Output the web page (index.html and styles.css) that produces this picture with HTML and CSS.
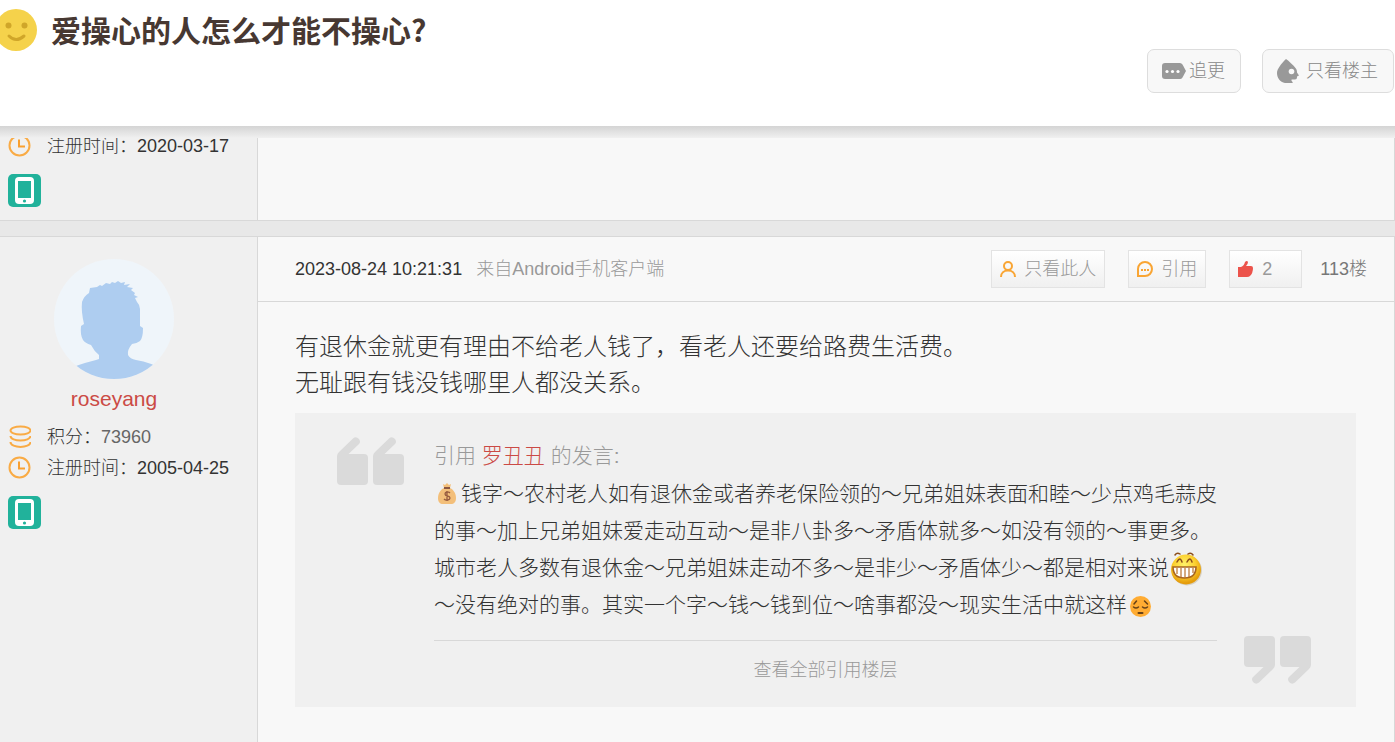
FILE: index.html
```html
<!DOCTYPE html>
<html lang="zh-CN">
<head>
    <meta charset="UTF-8">
    <meta name="viewport" content="width=device-width, initial-scale=1.0">
    <title>爱操心的人怎么才能不操心？</title>
    <link rel="stylesheet" href="styles.css">
</head>
<body>
    <!-- shared icons -->
    <svg class="sprite" width="0" height="0" aria-hidden="true">
        <symbol id="icon-clock" viewBox="0 0 23 23">
            <circle cx="11.5" cy="11.5" r="10" fill="none" stroke="#f9ab45" stroke-width="2"/>
            <path d="M11 5.5v7h6" fill="none" stroke="#f9a030" stroke-width="2"/>
        </symbol>
        <symbol id="icon-phone" viewBox="0 0 33 33">
            <rect width="33" height="33" rx="5" fill="#21b29b"/>
            <rect x="7" y="3" width="19" height="27" rx="4" fill="#fff"/>
            <rect x="10" y="7" width="13" height="17" fill="#21b29b"/>
            <circle cx="16.5" cy="27" r="1.6" fill="#21b29b"/>
        </symbol>
    </svg>

    <header class="topbar">
        <div class="title-row">
            <svg class="smile" viewBox="0 0 42 42" aria-hidden="true">
                <circle cx="21" cy="21" r="21" fill="#f5d24b"/>
                <circle cx="13.5" cy="16.5" r="3" fill="#d0a629"/>
                <circle cx="29.5" cy="16.5" r="3" fill="#d0a629"/>
                <path d="M14 27q7 7 15 0" fill="none" stroke="#d0a629" stroke-width="3" stroke-linecap="round"/>
            </svg>
            <h1>爱操心的人怎么才能不操心?</h1>
        </div>
        <div class="topbar-actions">
            <button type="button" class="top-button follow">
                <svg width="24" height="16" viewBox="0 0 24 16" aria-hidden="true">
                    <path d="M3 0h15q1.500 0 2.500 1.500L24 8l-3.500 6.500q-1 1.500-2.500 1.500H3q-3 0-3-3V3q0-3 3-3z" fill="#999"/>
                    <circle cx="5" cy="8.5" r="1.6" fill="#fff"/>
                    <circle cx="10.5" cy="8.5" r="1.6" fill="#fff"/>
                    <circle cx="16" cy="8.5" r="1.6" fill="#fff"/>
                </svg>
                追更
            </button>
            <button type="button" class="top-button owner">
                <svg width="22" height="24" viewBox="0 0 22 24" aria-hidden="true">
                    <path d="M9 0c3 2 7 6 9.500 9 1.500 2 1.500 3 1.500 4.500l2 3-2 1v1q0 2-2 2h-3c-1 0-1 1 1 3l-1 .5H8C3 23 0 19 0 14 0 10 4 5 9 0z" fill="#999"/>
                    <circle cx="14.5" cy="12.5" r="2.8" fill="#f8f8f8"/>
                </svg>
                只看楼主
            </button>
        </div>
    </header>

    <main>
        <article class="post post-previous">
            <aside class="user">
                <dl class="user-info">
                    <div class="info-row">
                        <svg class="info-icon" aria-hidden="true"><use href="#icon-clock"/></svg>
                        <dt>注册时间：</dt><dd>2020-03-17</dd>
                    </div>
                </dl>
                <svg class="phone" aria-hidden="true"><use href="#icon-phone"/></svg>
            </aside>
            <div class="post-main"></div>
        </article>

        <article class="post post-current">
            <aside class="user">
                <div class="profile">
                    <svg class="avatar" viewBox="0 0 120 120" aria-hidden="true">
                        <clipPath id="avatar-clip"><circle cx="60" cy="60" r="60"/></clipPath>
                        <g clip-path="url(#avatar-clip)">
                            <rect width="120" height="120" fill="#eff5fa"/>
                            <path fill="#aecdf0" d="M10 112Q22 106 42 101L45 100V96Q40 92 37 86Q31 84 29 81Q26 76 27 67L30 65Q27 52 28 43Q30 37 35 34L36 29L43 28L46 26L48 27L52 24L56 25L58 23L61 24L64 22L67 24L71 23L70 26L76 25L73 28L79 29L77 31L81 34L80 36L84 38L81 39L83 43Q86 46 86 50V67L89 69Q89 79 86 82Q82 85 78 85Q73 91 74 96Q76 100 82 101Q97 103 110 112V120H10z"/>
                        </g>
                    </svg>
                    <a class="user-name" href="#">roseyang</a>
                </div>
                <dl class="user-info">
                    <div class="info-row">
                        <svg class="info-icon" viewBox="0 0 23 23" aria-hidden="true">
                            <g fill="none" stroke="#f9ab45" stroke-width="2">
                                <ellipse cx="12.5" cy="5.5" rx="10" ry="4"/>
                                <path d="M2.500 11c0 6 20 6 20 0M2.500 17c0 6.500 20 6.500 20 0"/>
                            </g>
                        </svg>
                        <dt>积分：</dt><dd class="score">73960</dd>
                    </div>
                    <div class="info-row">
                        <svg class="info-icon" aria-hidden="true"><use href="#icon-clock"/></svg>
                        <dt>注册时间：</dt><dd>2005-04-25</dd>
                    </div>
                </dl>
                <svg class="phone" aria-hidden="true"><use href="#icon-phone"/></svg>
            </aside>

            <div class="post-main">
                <div class="post-head">
                    <time datetime="2023-08-24T10:21:31">2023-08-24 10:21:31</time>
                    <span class="source">来自Android手机客户端</span>
                    <div class="post-actions">
                        <button type="button" class="post-button">
                            <svg width="16" height="16" viewBox="0 0 16 16" aria-hidden="true">
                                <g fill="none" stroke="#f9a534" stroke-width="2">
                                    <circle cx="8" cy="5" r="4"/>
                                    <path d="M1 16c0-4 3-6.500 7-6.500s7 2.500 7 6.500"/>
                                </g>
                            </svg>
                            只看此人
                        </button>
                        <button type="button" class="post-button">
                            <svg width="16" height="16" viewBox="0 0 16 16" aria-hidden="true">
                                <path d="M1 15V8a7 7 0 1 1 7 7z" fill="none" stroke="#f9a534" stroke-width="2"/>
                                <path d="M4 9h2M7 9h2M10 9h2" stroke="#f9a534" stroke-width="2"/>
                            </svg>
                            引用
                        </button>
                        <button type="button" class="post-button like">
                            <svg width="16" height="16" viewBox="0 0 16 16" aria-hidden="true">
                                <path d="M0 6h3q3-1 4-5 2-2 3 0 0 2-2 4h5q2 0 2 2 0 5-3 8-1 1-3 1H0z" fill="#ec534b"/>
                            </svg>
                            <span class="like-count">2</span>
                        </button>
                        <span class="floor">113楼</span>
                    </div>
                </div>

                <div class="post-body">
                    <p>有退休金就更有理由不给老人钱了，看老人还要给路费生活费。<br>无耻跟有钱没钱哪里人都没关系。</p>

                    <blockquote class="quote">
                        <svg class="quote-mark" viewBox="0 0 67 48" aria-hidden="true">
                            <g id="mark" fill="#dadada">
                                <path d="M0 19Q0 17 2 15L16 1.500Q19-1 22 2 24 5 22 7L11.500 17H27q4 0 4 4v23q0 4-4 4H4q-4 0-4-4z"/>
                                <path d="M36 19Q36 17 38 15L52 1.500Q55-1 58 2 60 5 58 7L47.500 17H63q4 0 4 4v23q0 4-4 4H40q-4 0-4-4z"/>
                            </g>
                        </svg>
                        <div class="quote-content">
                            <div class="quote-from">引用 <a href="#">罗丑丑</a> 的发言:</div>
                            <p>
                                <svg class="emoji-bag" viewBox="0 0 18 21" role="img" aria-label="钱袋"><path d="M5 1l2 1 2-2 2 2 2-1-1 4c4 2 6 6 6 10 0 4-2 6-5 6H5c-3 0-5-2-5-6C0 11 2 7 6 5z" fill="#f3bf7a"/><path d="M6 4h6v2H6z" fill="#8b5742"/><path d="M12 10c-2-2-5-1-5 1 0 3 5 1 5 4 0 2-4 3-6 1M9 8v10" fill="none" stroke="#985c3f" stroke-width="1.300"/></svg>钱字～农村老人如有退休金或者养老保险领的～兄弟姐妹表面和睦～少点鸡毛蒜皮的事～加上兄弟姐妹爱走动互动～是非八卦多～矛盾体就多～如没有领的～事更多。城市老人多数有退休金～兄弟姐妹走动不多～是非少～矛盾体少～都是相对来说<svg class="emoji-grin" viewBox="0 0 34 34" role="img" aria-label="大笑"><defs><radialGradient id="grin" cx="45%" cy="35%" r="60%"><stop offset="0" stop-color="#fff36b"/><stop offset="0.600" stop-color="#fcd030"/><stop offset="1" stop-color="#e59c0b"/></radialGradient></defs><ellipse cx="18" cy="18.5" rx="15" ry="15" fill="#d6d1c6"/><circle cx="17" cy="17.5" r="15" fill="url(#grin)"/><g fill="none" stroke="#8c4e1b" stroke-width="1.500" stroke-linecap="round"><path d="M6 3q2-3 5-1M19 2q3-2 5 1M8 10q3-6 5 0M18 10q3-6 5 0"/></g><path d="M4 15h23q0 11-11.500 11T4 15z" fill="#fff" stroke="#a9651e" stroke-width="1.600"/><path d="M8 16v6M12 16v9M16 16v10M20 16v9M24 16v5" stroke="#b9722e" stroke-width="1.200"/></svg>～没有绝对的事。其实一个字～钱～钱到位～啥事都没～现实生活中就这样<svg class="emoji-sad" viewBox="0 0 21 21" role="img" aria-label="难过"><circle cx="10.5" cy="10.5" r="10.5" fill="#ffac33"/><g fill="none" stroke="#664118" stroke-width="1.500" stroke-linecap="round"><path d="M4 8l2.500-3M14.500 5l3 3M3.500 11q2.500 2 5 0M12.500 11q2.500 2 5 0"/><path d="M8.500 17h4" stroke-width="2"/></g></svg>
                            </p>
                            <a class="quote-more" href="#">查看全部引用楼层</a>
                        </div>
                        <svg class="quote-mark quote-mark-end" viewBox="0 0 67 48" aria-hidden="true">
                            <use href="#mark" transform="rotate(180 33.5 24)"/>
                        </svg>
                    </blockquote>
                </div>
            </div>
        </article>
    </main>
</body>
</html>
```
FILE: styles.css
```css
* {
    box-sizing: border-box;
}

body {
    display: flex;
    flex-direction: column;
    min-height: 100vh;
    margin: 0;
    background-color: #e8e8e8;
    color: #333;
    font-family: "Liberation Sans", "Noto Sans CJK SC", sans-serif;
    font-size: 18px;
    font-weight: 300;
    line-height: 24px;
}

p, dl, dd, h1, blockquote {
    margin: 0;
}

a {
    color: #cb4a45;
    text-decoration: none;
}

a:hover {
    text-decoration: underline;
}

button {
    font: inherit;
    cursor: pointer;
}

svg {
    flex-shrink: 0;
}

.sprite {
    position: absolute;
}

/* Header */
.topbar {
    position: relative;
    height: 126px;
    padding-top: 9px;
    background-color: #fff;
}

/* shadow strip lying over the scrolled posts */
.topbar::after {
    content: "";
    position: absolute;
    top: 100%;
    left: 0;
    right: 0;
    height: 12px;
    background: linear-gradient(#d4d4d4, #f0f0f0);
}

.title-row {
    display: flex;
    align-items: flex-start;
    gap: 14px;
    height: 40px;
    margin-left: -5px;
}

.smile {
    width: 42px;
    height: 42px;
}

h1 {
    font-family: "Noto Sans CJK SC", sans-serif;
    font-size: 30px;
    font-weight: bold;
    line-height: 40px;
    color: #473832;
}

.topbar-actions {
    display: flex;
    justify-content: flex-end;
    gap: 21px;
    padding-right: 1px;
}

.top-button {
    display: flex;
    align-items: center;
    height: 44px;
    padding: 0 15px 0 14px;
    border: 1px solid #ddd;
    border-radius: 7px;
    background-color: #f8f8f8;
    color: #888;
}

.follow {
    gap: 3px;
}

.owner {
    gap: 7px;
}

/* Posts */
main {
    display: flex;
    flex: 1;
    flex-direction: column;
    gap: 15px;
}

.post {
    display: flex;
    border-right: 1px solid #d8d8d8;
    border-bottom: 1px solid #d8d8d8;
    background-color: #f8f8f8;
}

.post-current {
    flex: 1;
    border-top: 1px solid #d8d8d8;
    border-bottom: none;
}

.user {
    flex: none;
    width: 258px;
    padding: 4px 0 13px 8px;
    border-right: 1px solid #d8d8d8;
    background-color: #f0f0f0;
}

.post-current .user {
    padding-top: 22px;
}

.profile {
    display: flex;
    flex-direction: column;
    align-items: center;
    gap: 4px;
    padding-right: 37px;
    margin-bottom: 6px;
}

.avatar {
    width: 120px;
    height: 120px;
}

.user-name {
    font-size: 21px;
    line-height: 32px;
}

.info-row {
    display: flex;
    align-items: center;
    height: 31px;
}

.info-icon {
    width: 23px;
    height: 23px;
    margin-right: 16px;
}

.score {
    color: #666;
}

.phone {
    display: block;
    width: 33px;
    height: 33px;
    margin-top: 13px;
}

.post-main {
    flex: 1;
    min-width: 0;
}

.post-head {
    display: flex;
    align-items: center;
    gap: 14px;
    height: 65px;
    padding: 0 27px 0 37px;
    border-bottom: 1px solid #d8d8d8;
}

.source {
    color: #999;
}

.post-actions {
    display: flex;
    align-items: center;
    gap: 23px;
    margin-left: auto;
}

.post-button {
    display: flex;
    align-items: center;
    gap: 8px;
    height: 38px;
    padding: 0 8px;
    border: 1px solid #e3e3e3;
    background: linear-gradient(#fff, #f0f0f0);
    color: #999;
}

.like-count {
    min-width: 31px;
    text-align: left;
}

.floor {
    margin-left: -5px;
    color: #777;
}

.post-body {
    padding: 27px 38px 35px 37px;
    font-size: 24px;
    line-height: 36px;
}

/* Quote */
.quote {
    display: flex;
    margin-top: 12px;
    padding: 24px 45px 23px 42px;
    background-color: #f0f0f0;
    font-size: 21px;
    line-height: 37px;
}

.quote-mark {
    width: 67px;
    height: 48px;
    margin-right: 30px;
}

.quote-mark-end {
    align-self: flex-end;
    margin: 0 0 0 27px;
}

.quote-content {
    flex: 1;
}

.quote-from {
    margin-bottom: 1px;
    color: #999;
}

.quote-content p svg {
    vertical-align: middle;
}

.emoji-bag {
    width: 18px;
    height: 21px;
    margin: 0 5px 0 4px;
}

.quote-content .emoji-bag {
    vertical-align: -3px;
}

.emoji-grin {
    width: 34px;
    height: 34px;
}

.emoji-sad {
    width: 21px;
    height: 21px;
    margin-left: 3px;
}

.quote-more {
    display: block;
    margin-top: 17px;
    padding-top: 15px;
    border-top: 1px solid #d8d8d8;
    color: #999;
    font-size: 18px;
    line-height: 28px;
    text-align: center;
}
```
